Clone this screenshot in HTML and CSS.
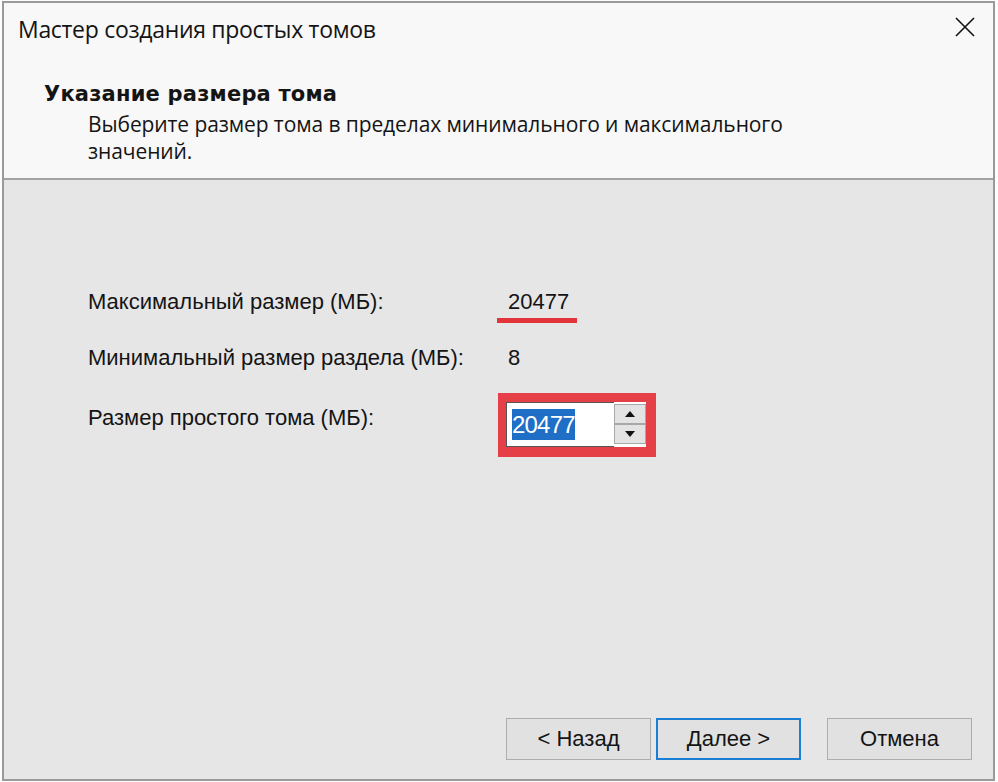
FILE: index.html
```html
<!DOCTYPE html>
<html lang="ru">
<head>
<meta charset="utf-8">
<link rel="stylesheet" href="styles.css">
</head>
<body>
<div class="window">
  <div class="header">
    <div class="titlebar">
      <div class="title">Мастер создания простых томов</div>
      <div class="close">
        <svg width="20" height="20" viewBox="0 0 20 20"><path d="M1 1L19 19M19 1L1 19" stroke="#111" stroke-width="1.6" fill="none"/></svg>
      </div>
    </div>
    <div class="heading">Указание размера тома</div>
    <div class="desc">Выберите размер тома в пределах минимального и максимального<br>значений.</div>
  </div>
  <div class="body">
    <div class="rows">
      <div class="row">
        <div class="label">Максимальный размер (МБ):</div>
        <div class="value marked">20477</div>
      </div>
      <div class="row row2">
        <div class="label">Минимальный размер раздела (МБ):</div>
        <div class="value">8</div>
      </div>
      <div class="row row3">
        <div class="label">Размер простого тома (МБ):</div>
        <div class="redbox">
          <div class="spin">
            <div class="input"><span class="sel">20477</span></div>
            <div class="arrows">
              <div class="arr"><svg width="12" height="8" viewBox="0 0 12 8"><path d="M6 1L11 7H1Z" fill="#111"/></svg></div>
              <div class="arr"><svg width="12" height="8" viewBox="0 0 12 8"><path d="M1 1H11L6 7Z" fill="#111"/></svg></div>
            </div>
          </div>
        </div>
      </div>
    </div>
    <div class="buttons">
      <div class="btn">&lt; Назад</div>
      <div class="btn primary">Далее &gt;</div>
      <div class="btn cancel">Отмена</div>
    </div>
  </div>
</div>
</body>
</html>
```

FILE: styles.css
```css
html, body {
  margin: 0;
  padding: 0;
  background: #fdfdfd;
}
body {
  width: 998px;
  height: 782px;
  font-family: "Liberation Sans", Arial, sans-serif;
  color: #141414;
}
.window {
  box-sizing: border-box;
  margin-left: 2px;
  margin-top: 1px;
  width: 993px;
  height: 780px;
  border: 2px solid #9a9a9a;
  display: flex;
  flex-direction: column;
}
.header {
  background: #f8f8f8;
  height: 175px;
  border-bottom: 2px solid #a2a2a2;
  padding-left: 14px;
}
.titlebar {
  display: flex;
  justify-content: space-between;
  align-items: flex-start;
  height: 70px;
}
.title {
  font-family: "Open Sans", sans-serif;
  font-size: 23px;
  margin-top: 10px;
  letter-spacing: -0.3px;
}
.close {
  margin-right: 18px;
  margin-top: 14px;
}
.heading {
  font-family: "DejaVu Sans", sans-serif;
  font-weight: bold;
  font-size: 21px;
  margin-left: 26px;
  margin-top: 9px;
  letter-spacing: 0.2px;
}
.desc {
  font-family: "Open Sans", sans-serif;
  font-size: 21px;
  line-height: 27px;
  margin-left: 70px;
  margin-top: 5px;
  letter-spacing: -0.1px;
}
.body {
  flex: 1;
  background: #e6e6e6;
  display: flex;
  flex-direction: column;
  justify-content: space-between;
}
.rows {
  padding-left: 84px;
  padding-top: 107px;
}
.row {
  display: flex;
  align-items: center;
  height: 30px;
  font-size: 22px;
}
.row2 {
  margin-top: 26px;
}
.row3 {
  margin-top: 30px;
}
.label {
  width: 409px;
}
.value {
  padding-left: 11px;
}
.marked {
  position: relative;
  padding-left: 11px;
}
.marked::after {
  content: "";
  position: absolute;
  left: 0;
  width: 80px;
  bottom: -8px;
  height: 5px;
  background: #e2343b;
}
.redbox {
  box-sizing: border-box;
  width: 158px;
  height: 64px;
  background: #e54047;
  padding: 9px 10px 10px 8px;
  margin-left: 1px;
  margin-top: 14px;
}
.spin {
  display: flex;
  height: 45px;
  background: #fff;
}
.input {
  width: 104px;
  border: 1px solid #555;
  border-right: none;
  display: flex;
  align-items: center;
  padding-left: 5px;
}
.sel {
  background: #1f6fc6;
  color: #fff;
  font-size: 24px;
  line-height: 31px;
  letter-spacing: -0.8px;
}
.arrows {
  display: flex;
  flex-direction: column;
  justify-content: space-between;
  padding: 2px 0 3px 0;
  width: 33px;
  background: #fff;
}
.arr {
  height: 18px;
  background: #e3e3e3;
  border: 1px solid #a8a8a8;
  display: flex;
  align-items: center;
  justify-content: center;
}
.buttons {
  display: flex;
  justify-content: flex-end;
  padding-right: 21px;
  padding-bottom: 19px;
}
.btn {
  box-sizing: border-box;
  width: 145px;
  height: 42px;
  border: 1px solid #adadad;
  background: #e1e1e1;
  font-size: 22px;
  display: flex;
  align-items: center;
  justify-content: center;
  margin-left: 5px;
}
.primary {
  border: 2px solid #1a7fd4;
}
.cancel {
  margin-left: 26px;
}
```
